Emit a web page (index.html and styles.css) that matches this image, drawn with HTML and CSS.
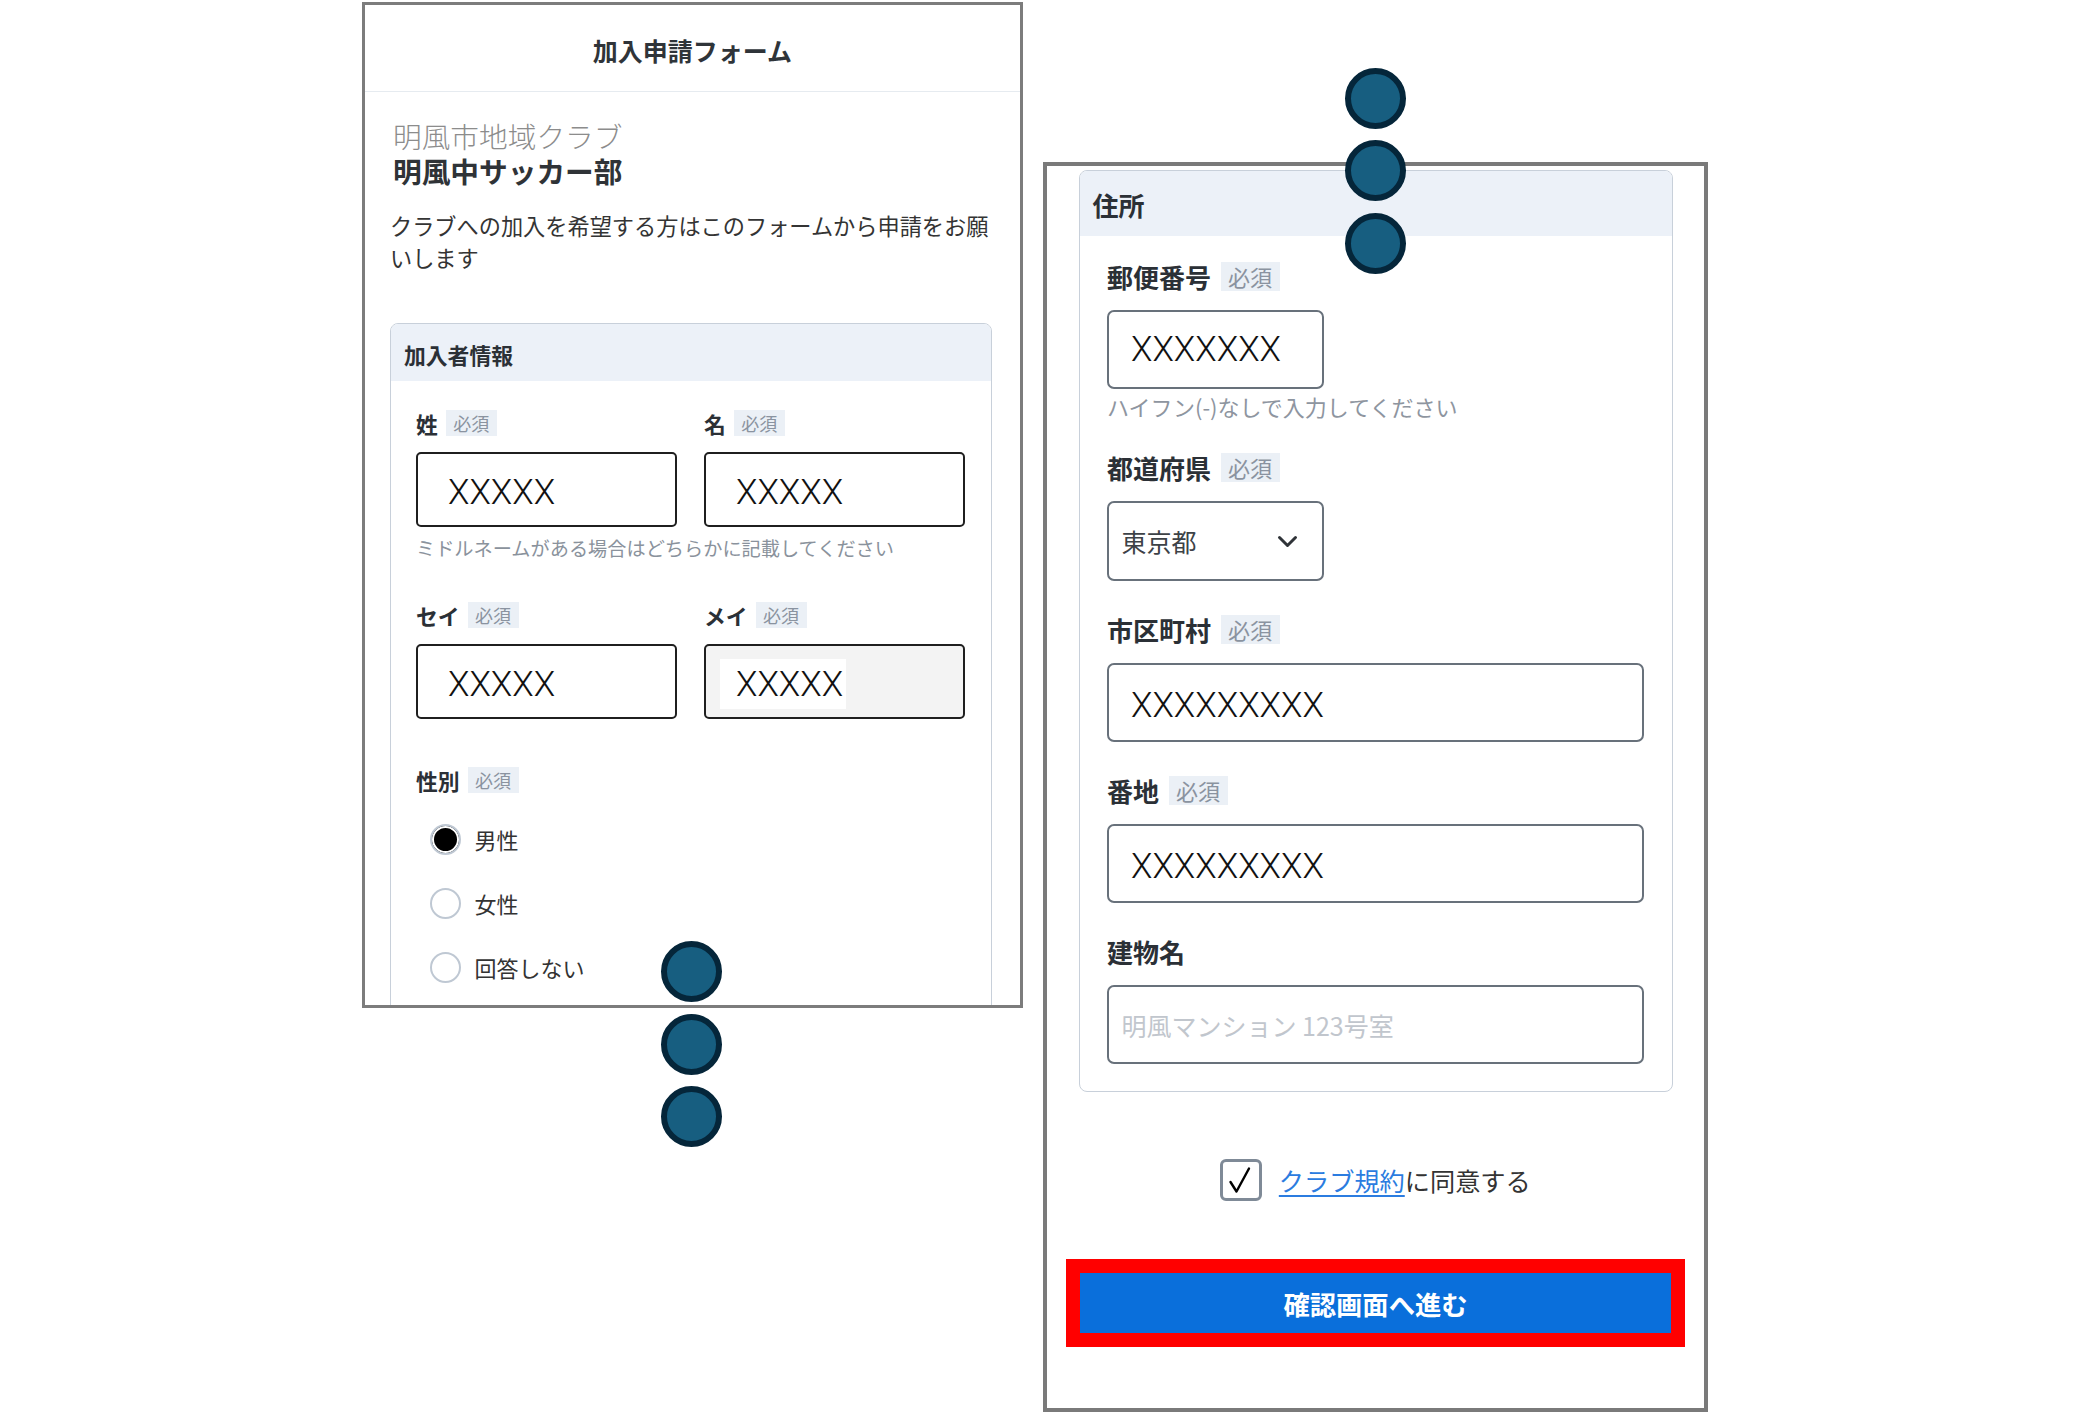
FILE: index.html
```html
<!DOCTYPE html>
<html lang="ja">
<head>
<meta charset="utf-8">
<title>加入申請フォーム</title>
<link rel="stylesheet" href="styles.css">
</head>
<body>
<div class="canvas">

  <section class="panel panel-left">
    <header class="panel-head"><h1>加入申請フォーム</h1></header>
    <div class="panel-body">
      <p class="org">明風市地域クラブ</p>
      <p class="team">明風中サッカー部</p>
      <p class="desc">クラブへの加入を希望する方はこのフォームから申請をお願いします</p>

      <div class="card">
        <div class="card-head">加入者情報</div>
        <div class="card-body">
          <div class="row2">
            <div class="field">
              <div class="label">姓<span class="badge">必須</span></div>
              <div class="input"><span>XXXXX</span></div>
            </div>
            <div class="field">
              <div class="label">名<span class="badge">必須</span></div>
              <div class="input"><span>XXXXX</span></div>
            </div>
          </div>
          <p class="hint">ミドルネームがある場合はどちらかに記載してください</p>

          <div class="row2 row-kana">
            <div class="field">
              <div class="label">セイ<span class="badge">必須</span></div>
              <div class="input"><span>XXXXX</span></div>
            </div>
            <div class="field">
              <div class="label">メイ<span class="badge">必須</span></div>
              <div class="input auto"><span>XXXXX</span></div>
            </div>
          </div>

          <div class="gender">
            <div class="label">性別<span class="badge">必須</span></div>
            <div class="radios">
              <div class="radio-row"><span class="radio checked"></span><span class="radio-text">男性</span></div>
              <div class="radio-row"><span class="radio"></span><span class="radio-text">女性</span></div>
              <div class="radio-row"><span class="radio"></span><span class="radio-text">回答しない</span></div>
            </div>
          </div>
        </div>
      </div>
    </div>
  </section>

  <section class="panel panel-right">
    <div class="card card-r">
      <div class="card-head card-head-r">住所</div>
      <div class="card-body-r">
        <div class="group with-hint">
          <div class="label-r">郵便番号<span class="badge-r">必須</span></div>
          <div class="rinput short"><span>XXXXXXX</span></div>
          <p class="hint-r">ハイフン(-)なしで入力してください</p>
        </div>
        <div class="group">
          <div class="label-r">都道府県<span class="badge-r">必須</span></div>
          <div class="rselect short">
            <span class="rselect-text">東京都</span>
            <svg class="chev" width="21" height="13" viewBox="0 0 21 13"><path d="M2.5 2.5 L10.5 10.5 L18.5 2.5" fill="none" stroke="#2f3338" stroke-width="3" stroke-linecap="round" stroke-linejoin="round"/></svg>
          </div>
        </div>
        <div class="group">
          <div class="label-r">市区町村<span class="badge-r">必須</span></div>
          <div class="rinput valued"><span>XXXXXXXXX</span></div>
        </div>
        <div class="group">
          <div class="label-r">番地<span class="badge-r">必須</span></div>
          <div class="rinput valued"><span>XXXXXXXXX</span></div>
        </div>
        <div class="group">
          <div class="label-r">建物名</div>
          <div class="rinput placeholder"><span>明風マンション 123号室</span></div>
        </div>
      </div>
    </div>

    <div class="agree">
      <span class="checkbox">
        <svg width="36" height="36" viewBox="0 0 36 36"><path d="M7.5 20 L13.5 29.5 L26 6.5" fill="none" stroke="#000" stroke-width="2.4" stroke-linecap="round" stroke-linejoin="round"/></svg>
      </span>
      <span class="agree-text"><a class="link" href="#">クラブ規約</a>に同意する</span>
    </div>

    <div class="btn-outline">
      <div class="btn">確認画面へ進む</div>
    </div>
  </section>

  <span class="dot dot-l1"></span>
  <span class="dot dot-l2"></span>
  <span class="dot dot-l3"></span>
  <span class="dot dot-r1"></span>
  <span class="dot dot-r2"></span>
  <span class="dot dot-r3"></span>
</div>
</body>
</html>
```

FILE: styles.css
```css
html, body {
  margin: 0;
  padding: 0;
  background: #ffffff;
}
body {
  font-family: "Noto Sans CJK JP", "Noto Sans", sans-serif;
  color: #333333;
}
.canvas {
  position: relative;
  width: 2097px;
  height: 1413px;
  overflow: hidden;
}
p { margin: 0; }

/* panels placed on the free canvas */
.panel {
  position: absolute;
  box-sizing: border-box;
  background: #ffffff;
  overflow: hidden;
}
.panel-left {
  left: 362px;
  top: 2px;
  width: 661px;
  height: 1006px;
  border: 3px solid #7c7c7c;
}
.panel-right {
  left: 1043px;
  top: 162px;
  width: 665px;
  height: 1250px;
  border: 4px solid #7a7a7a;
}

/* left panel */
.panel-head {
  box-sizing: border-box;
  height: 87px;
  padding-top: 4px;
  border-bottom: 1px solid #e6ebf0;
  display: flex;
  align-items: center;
  justify-content: center;
}
.panel-head h1 {
  margin: 0;
  font-size: 25px;
  line-height: 1;
  font-weight: 700;
  color: #2f3439;
}
.panel-body {
  padding: 26px 28px 0 25px;
}
.org {
  padding-left: 3px;
  font-size: 28.7px;
  line-height: 35px;
  font-weight: 300;
  color: #8c8c8c;
}
.team {
  padding-left: 3px;
  font-size: 28.7px;
  line-height: 35px;
  font-weight: 700;
  color: #2f3337;
}
.desc {
  margin-top: 21px;
  font-size: 22.2px;
  line-height: 32px;
  color: #343434;
  word-break: break-all;
  line-break: anywhere;
}
.card {
  margin-top: 50px;
  border: 1px solid #c8d0da;
  border-radius: 8px;
  overflow: hidden;
}
.card-head {
  box-sizing: border-box;
  height: 57px;
  padding: 3px 0 0 13px;
  display: flex;
  align-items: center;
  background: #ecf1f8;
  font-size: 21.8px;
  font-weight: 700;
  color: #2b3036;
}
.card-body {
  padding: 29px 26px 200px 25px;
}
.row2 {
  display: grid;
  grid-template-columns: 261px 261px;
  column-gap: 27px;
}
.row-kana {
  margin-top: 41px;
}
.label {
  display: flex;
  align-items: center;
  gap: 8px;
  height: 26px;
  font-size: 21.8px;
  font-weight: 700;
  color: #2b3036;
}
.badge {
  height: 26px;
  line-height: 26px;
  padding: 0 7.5px;
  background: #ebf0f6;
  color: #8a93a0;
  font-size: 18px;
  font-weight: 400;
}
.input {
  box-sizing: border-box;
  margin-top: 16px;
  height: 75px;
  padding: 5px 0 0 14px;
  border: 2px solid #1f1f1f;
  border-radius: 5px;
  display: flex;
  align-items: center;
  font-family: Roboto, "Liberation Sans", sans-serif;
  font-size: 35px;
  font-weight: 300;
  color: #111111;
}
.input span {
  padding: 0 2.5px 0 16px;
}
.input.auto {
  background: #f3f3f3;
}
.input.auto span {
  height: 50px;
  display: flex;
  align-items: center;
  background: #ffffff;
}
.hint {
  margin-top: 8px;
  font-size: 19.2px;
  line-height: 26px;
  color: #8a929c;
}
.gender {
  margin-top: 48px;
}
.radios {
  margin-top: 31px;
  padding-left: 13.5px;
  display: flex;
  flex-direction: column;
  gap: 33px;
}
.radio-row {
  display: flex;
  align-items: center;
  gap: 14px;
  height: 31px;
}
.radio {
  box-sizing: border-box;
  width: 31px;
  height: 31px;
  border-radius: 50%;
  border: 2px solid #bfc8d3;
  background: #ffffff;
}
.radio.checked {
  background: #000000;
  box-shadow: inset 0 0 0 2px #ffffff;
}
.radio-text {
  font-size: 22px;
  line-height: 31px;
  color: #333333;
}

/* right panel */
.card-r {
  margin: 4px 31px 0 32px;
}
.card-head-r {
  height: 65px;
  padding: 1px 0 0 12.5px;
  font-size: 26px;
}
.card-body-r {
  padding: 26px 28px 27px 27px;
}
.group + .group {
  margin-top: 34px;
}
.group.with-hint + .group {
  margin-top: 33px;
}
.label-r {
  display: flex;
  align-items: center;
  gap: 9.5px;
  height: 29px;
  font-size: 26px;
  font-weight: 700;
  color: #2b3036;
}
.badge-r {
  height: 29px;
  line-height: 29px;
  padding: 0 7.5px;
  background: #ebf0f6;
  color: #8a93a0;
  font-size: 22px;
  font-weight: 400;
}
.rinput {
  box-sizing: border-box;
  margin-top: 19px;
  height: 79px;
  padding-left: 22px;
  border: 2px solid #68717b;
  border-radius: 7px;
  display: flex;
  align-items: center;
  font-family: Roboto, "Liberation Sans", sans-serif;
  font-size: 35px;
  font-weight: 300;
  color: #111111;
}
.rinput.valued {
  padding-top: 5px;
}
.rinput.short {
  width: 217px;
}
.rinput.placeholder {
  padding-left: 12.5px;
  font-family: "Noto Sans CJK JP", sans-serif;
  font-size: 25px;
  font-weight: 400;
  color: #c1c6cd;
}
.hint-r {
  margin-top: 3px;
  font-size: 22px;
  line-height: 28px;
  color: #8e959f;
}
.rselect {
  box-sizing: border-box;
  margin-top: 19px;
  width: 217px;
  height: 80px;
  padding: 0 24.5px 0 12.5px;
  border: 2px solid #68717b;
  border-radius: 7px;
  display: flex;
  align-items: center;
  justify-content: space-between;
}
.rselect-text {
  font-size: 25px;
  color: #3d4247;
}
.chev {
  display: block;
}
.agree {
  margin-top: 67px;
  height: 42px;
  display: flex;
  align-items: center;
  justify-content: center;
  gap: 16.5px;
}
.checkbox {
  box-sizing: border-box;
  width: 42px;
  height: 42px;
  border: 3px solid #7f8a97;
  border-radius: 6px;
  display: flex;
  align-items: center;
  justify-content: center;
}
.checkbox svg { display: block; }
.agree-text {
  font-size: 25.2px;
  color: #333333;
}
.link {
  color: #2b7ce0;
  text-decoration: underline;
  text-underline-offset: 4px;
}
.btn-outline {
  margin: 58px 19px 0;
  border: 14px solid #ff0000;
}
.btn {
  height: 60px;
  background: #0a6fdb;
  color: #ffffff;
  font-size: 26.3px;
  font-weight: 700;
  display: flex;
  align-items: center;
  justify-content: center;
}

/* overlay step dots */
.dot {
  position: absolute;
  box-sizing: border-box;
  width: 61px;
  height: 61px;
  border-radius: 50%;
  border: 6px solid #05263a;
  background: #175e80;
}
.dot-l1 { left: 660.5px; top: 940.5px; }
.dot-l2 { left: 660.5px; top: 1013.5px; }
.dot-l3 { left: 660.5px; top: 1085.5px; }
.dot-r1 { left: 1345px; top: 67.5px; }
.dot-r2 { left: 1345px; top: 139.5px; }
.dot-r3 { left: 1345px; top: 212.5px; }
```
